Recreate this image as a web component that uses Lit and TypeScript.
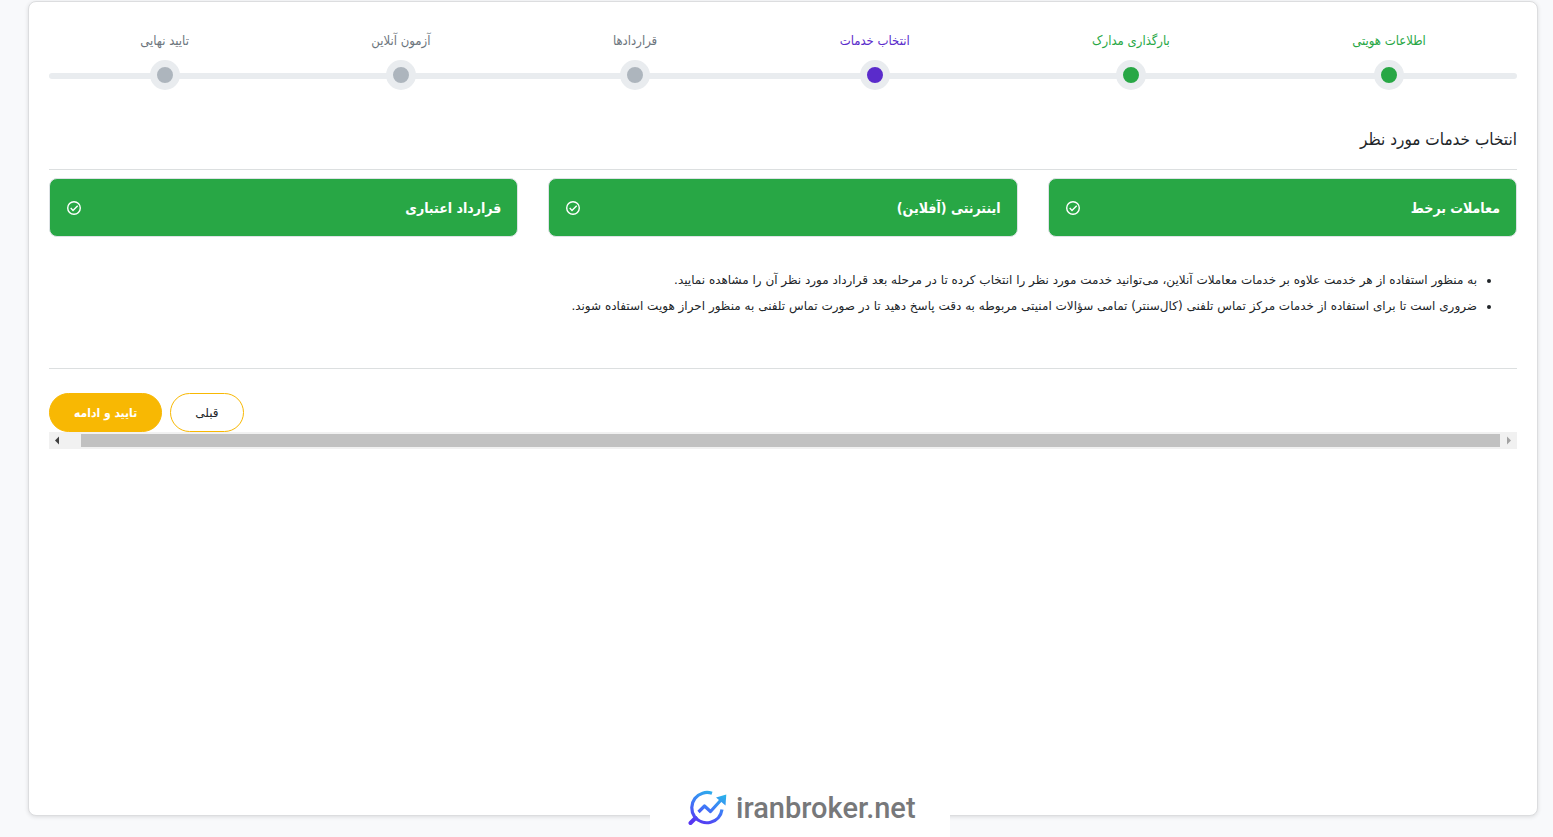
import { LitElement, html, css, svg } from "lit";
import { customElement, property, state } from "lit/decorators.js";
import { classMap } from "lit/directives/class-map.js";

type StepState = "done" | "current" | "todo";

@customElement("step-progress")
class StepProgress extends LitElement {
  static styles = css`
    :host { display: block; }
    .steps {
      position: relative;
      display: flex;
      margin: 0;
      padding: 0;
      list-style: none;
      font-family: "DejaVu Sans Condensed", "DejaVu Sans", sans-serif;
      font-size: 13px;
      line-height: 20px;
    }
    .steps::before {
      content: "";
      position: absolute;
      inset: 42px 0 auto;
      height: 6px;
      border-radius: 3px;
      background: #e9ecef;
    }
    .step {
      position: relative;
      flex: 1 1 auto;
      display: flex;
      flex-direction: column;
      align-items: center;
      gap: 9px;
      color: #6c757d;
    }
    .dot {
      box-sizing: border-box;
      width: 30px;
      height: 30px;
      border: 7px solid #e9ecef;
      border-radius: 50%;
      background: #adb5bd;
    }
    .done { color: #28a745; }
    .done .dot { background: #28a745; }
    .current { color: #5a2bcb; }
    .current .dot { background: #5a2bcb; }
  `;

  @property({ attribute: false }) steps: { label: string; state: StepState }[] = [];

  render() {
    return html`<ol class="steps">
      ${this.steps.map(
        (s) => html`<li class=${classMap({ step: true, [s.state]: true })}
          aria-current=${s.state === "current" ? "step" : "false"}>
          <span>${s.label}</span><span class="dot"></span>
        </li>`
      )}
    </ol>`;
  }
}

@customElement("service-option")
class ServiceOption extends LitElement {
  static styles = css`
    :host { display: block; }
    .option {
      box-sizing: border-box;
      display: flex;
      align-items: center;
      justify-content: space-between;
      height: 59px;
      padding: 0 16px;
      border: 1px solid #dee2e6;
      border-radius: 8px;
      font-family: "DejaVu Sans Condensed", "DejaVu Sans", sans-serif;
      font-size: 14px;
      font-weight: 700;
      cursor: pointer;
    }
    .selected { background: #28a745; color: #fff; }
    .tick { display: grid; width: 16px; height: 16px; }
    .box, .mark { grid-area: 1 / 1; width: 16px; height: 16px; margin: 0; }
    .box { appearance: none; }
    .mark { pointer-events: none; }
  `;

  @property() label = "";
  @state() private checked = true;

  render() {
    return html`<label class=${classMap({ option: true, selected: this.checked })}>
      <span>${this.label}</span>
      <span class="tick">
        <input class="box" type="checkbox" .checked=${this.checked}
          @change=${(e: Event) => (this.checked = (e.target as HTMLInputElement).checked)} />
        <svg class="mark" viewBox="0 0 16 16" fill="none" stroke="currentColor" stroke-width="1.4">
          <circle cx="8" cy="8" r="6.3" />
          ${this.checked ? svg`<path d="M4.700 8.100 7 10.400 11.700 5.700" />` : null}
        </svg>
      </span>
    </label>`;
  }
}

@customElement("app-root")
class AppRoot extends LitElement {
  static styles = css`
    :host {
      display: flow-root;
      min-height: 100vh;
      box-sizing: border-box;
      background: #f8f9fb;
      color: #212529;
      direction: rtl;
      font-family: "DejaVu Sans", sans-serif;
      font-size: 12px;
    }
    .card {
      box-sizing: border-box;
      min-height: calc(100vh - 22px);
      margin: 1px 15px 21px 28px;
      padding: 29px 20px 20px;
      border: 1px solid #dcdddf;
      border-radius: 8px;
      background: #fff;
      box-shadow: 0 1px 4px rgba(0, 0, 0, 0.12);
    }
    .title {
      margin: 36px 0 8px;
      padding-bottom: 17px;
      border-bottom: 1px solid #dcdfe0;
      font-family: "DejaVu Sans Condensed", "DejaVu Sans", sans-serif;
      font-size: 17px;
      font-weight: 400;
      line-height: 26px;
    }
    .services {
      display: grid;
      grid-template-columns: repeat(3, 1fr);
      gap: 30px;
    }
    .notes {
      margin: 30px 0 49px;
      padding: 0 40px 0 0;
      line-height: 26px;
    }
    .actions {
      display: flex;
      justify-content: flex-end;
      gap: 8px;
      padding-top: 24px;
      border-top: 1px solid #dcdfe0;
    }
    .btn {
      height: 39px;
      padding: 0 24px;
      border: 1px solid #f8b803;
      border-radius: 20px;
      background: #fff;
      color: #212529;
      font: inherit;
      cursor: pointer;
    }
    .primary {
      background: #f8b803;
      color: #fff;
      font-family: "DejaVu Sans Condensed", "DejaVu Sans", sans-serif;
      font-weight: 700;
    }
    .scrollbar {
      display: flex;
      height: 17px;
      direction: ltr;
      background: #f1f1f1;
    }
    .arrow {
      flex: none;
      width: 17px;
      height: 17px;
      padding: 0;
      border: 0;
      background: none;
      color: #404040;
    }
    .end { color: #a3a3a3; }
    .arrow svg { display: block; }
    .thumb { flex: 1; margin: 2px 0 2px 15px; background: #c1c1c1; }
    .brand {
      position: fixed;
      left: 650px;
      bottom: 0;
      box-sizing: border-box;
      display: flex;
      align-items: center;
      gap: 8px;
      width: 300px;
      height: 58px;
      padding-left: 38px;
      direction: ltr;
      background: #fff;
      color: #77787a;
      font: 500 29px/38px Roboto, sans-serif;
    }
    .brand svg { flex: none; }
  `;

  private steps = [
    { label: "اطلاعات هویتی", state: "done" as StepState },
    { label: "بارگذاری مدارک", state: "done" as StepState },
    { label: "انتخاب خدمات", state: "current" as StepState },
    { label: "قراردادها", state: "todo" as StepState },
    { label: "آزمون آنلاین", state: "todo" as StepState },
    { label: "تایید نهایی", state: "todo" as StepState },
  ];

  private services = ["معاملات برخط", "اینترنتی (آفلاین)", "قرارداد اعتباری"];

  render() {
    return html`
      <main class="card" lang="fa">
        <step-progress .steps=${this.steps}></step-progress>
        <h1 class="title">انتخاب خدمات مورد نظر</h1>
        <div class="services">
          ${this.services.map((s) => html`<service-option .label=${s}></service-option>`)}
        </div>
        <ul class="notes">
          <li>به منظور استفاده از هر خدمت علاوه بر خدمات معاملات آنلاین، می‌توانید خدمت مورد نظر را انتخاب کرده تا در مرحله بعد قرارداد مورد نظر آن را مشاهده نمایید.</li>
          <li>ضروری است تا برای استفاده از خدمات مرکز تماس تلفنی (کال‌سنتر) تمامی سؤالات امنیتی مربوطه به دقت پاسخ دهید تا در صورت تماس تلفنی به منظور احراز هویت استفاده شوند.</li>
        </ul>
        <div class="actions">
          <button class="btn" type="button">قبلی</button>
          <button class="btn primary" type="button">تایید و ادامه</button>
        </div>
        <div class="scrollbar">
          <button class="arrow" type="button" aria-label="چپ">
            <svg width="17" height="17" viewBox="0 0 17 17"><path fill="currentColor" d="M10 4.500v8L6 8.500z" /></svg>
          </button>
          <div class="thumb"></div>
          <button class="arrow end" type="button" aria-label="راست">
            <svg width="17" height="17" viewBox="0 0 17 17"><path fill="currentColor" d="M7 4.500v8l4-4z" /></svg>
          </button>
        </div>
      </main>
      <div class="brand">
        <svg width="40" height="38" viewBox="0 0 40 38" fill="none" stroke="url(#g)" stroke-width="3.2">
          <defs>
            <linearGradient id="g" gradientUnits="userSpaceOnUse" x1="14" y1="36" x2="28" y2="3">
              <stop offset="0" stop-color="#5636f2" />
              <stop offset="0.5" stop-color="#3f78f7" />
              <stop offset="1" stop-color="#2cb2ea" />
            </linearGradient>
          </defs>
          <path d="M24 4.300A15.300 15.300 0 0 0 6.500 27.500A15.300 15.300 0 0 0 34 20.500" />
          <path d="M2.500 34 7.500 29" stroke-width="4" stroke-linecap="round" />
          <path d="M10.500 23 16.500 17 22.500 22.500 33 11" stroke-linejoin="round" />
          <path d="M38.300 5.500 28 8.500 37.500 16.500z" fill="url(#g)" stroke="none" />
        </svg>
        <span>iranbroker.net</span>
      </div>
    `;
  }
}
